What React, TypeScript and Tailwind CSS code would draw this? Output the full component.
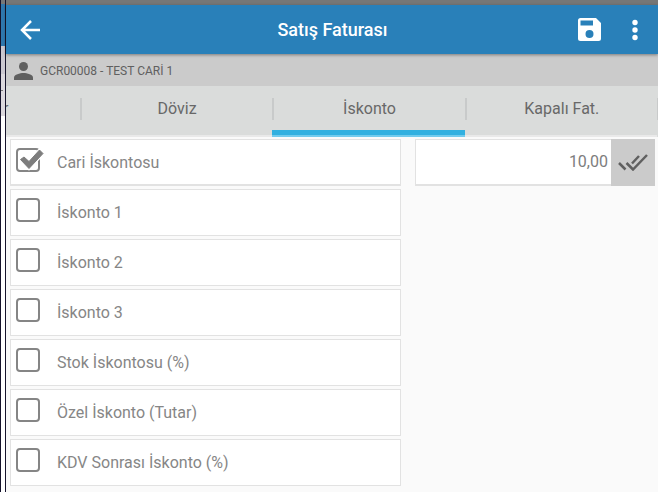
import React from 'react';
import clsx from 'clsx';

interface DiscountOption {
  id: string;
  label: string;
  checked?: boolean;
}

const OPTIONS: DiscountOption[] = [
  { id: 'cari', label: 'Cari İskontosu', checked: true },
  { id: 'iskonto1', label: 'İskonto 1' },
  { id: 'iskonto2', label: 'İskonto 2' },
  { id: 'iskonto3', label: 'İskonto 3' },
  { id: 'stok', label: 'Stok İskontosu (%)' },
  { id: 'ozel', label: 'Özel İskonto (Tutar)' },
  { id: 'kdv', label: 'KDV Sonrası İskonto (%)' },
];

const TABS = ['Döviz', 'İskonto', 'Kapalı Fat.'];

const OptionRow: React.FC<{ option: DiscountOption }> = ({ option }) => (
  <li
    className={clsx(
      'flex h-[47px] items-start border border-[#e2e2e2] bg-white pl-[5px] pt-2',
      option.checked && 'border-b-2'
    )}
  >
    <span className="relative block size-6 shrink-0">
      <input
        id={option.id}
        type="checkbox"
        defaultChecked={option.checked}
        className="peer block size-6 appearance-none rounded-[4px] border-2 border-[#858585]"
      />
      <svg viewBox="0 0 28 24" className="pointer-events-none absolute left-0 top-0 hidden h-6 w-7 peer-checked:block">
        <path d="M4.500 11.500 8 9l5 4.500L23.500 2 27 5.500 13 20.500z" fill="#fff" stroke="#fff" strokeWidth="3" />
        <path d="M4.500 11.500 8 9l5 4.500L23.500 2 27 5.500 13 20.500z" fill="#7d7d7d" stroke="#7d7d7d" strokeLinejoin="round" />
      </svg>
    </span>
    <label htmlFor={option.id} className="ml-[17px] pt-[3px] text-[16px] leading-6 text-[#868686]">
      {option.label}
    </label>
  </li>
);

export default function App() {
  return (
    <div className="flex min-h-screen overflow-hidden bg-[#fafafa] font-['Roboto','Liberation_Sans',sans-serif]">
      {/* Edge of the screen behind */}
      <div className="flex w-[6px] shrink-0 flex-col border-l border-r border-[#15132b] bg-white">
        <div className="h-1 bg-[#777]" />
        <div className="h-[42px] bg-[#2f78ae]" />
        <div className="h-7 bg-[#cbc8d0]" />
        <div className="h-[42px] bg-[#dbd8dd] pt-4">
          <div className="h-px w-[2px] bg-[#777]" />
        </div>
      </div>

      <div className="flex min-w-0 flex-1 flex-col">
        <div className="h-[5px] bg-[#777776]" />

        <header className="relative z-10 flex h-[49px] items-center bg-[#2980b9] text-white shadow-[0_1px_3px_rgba(0,0,0,0.4)]">
          <button type="button" aria-label="Geri" className="flex w-12 justify-center">
            <svg viewBox="0 0 20 20" className="size-5" fill="none" stroke="currentColor" strokeWidth="2.500">
              <path d="M20 10H2M11 1 2 10l9 9" />
            </svg>
          </button>
          <h1 className="flex-1 pl-11 text-center text-[18px] font-medium leading-6">Satış Faturası</h1>
          <button type="button" aria-label="Kaydet" className="flex w-11 justify-center">
            <svg viewBox="0 0 23 23" className="size-[23px]" fill="currentColor" fillRule="evenodd">
              <path d="M2.500 0H18l5 5v15.500a2.500 2.500 0 0 1-2.500 2.500h-18A2.500 2.500 0 0 1 0 20.500v-18A2.500 2.500 0 0 1 2.500 0zM2.500 2.500v5h12.500v-5zM11.500 12a4 4 0 1 0 0 8 4 4 0 0 0 0-8z" />
            </svg>
          </button>
          <button type="button" aria-label="Menü" className="flex w-[47px] justify-center">
            <svg viewBox="0 0 6 22" className="h-[22px] w-[6px]" fill="currentColor">
              <circle cx="3" cy="3.500" r="2.700" />
              <circle cx="3" cy="11" r="2.700" />
              <circle cx="3" cy="18.500" r="2.700" />
            </svg>
          </button>
        </header>

        <div className="flex h-8 items-center gap-[7px] bg-[#cbcbcb] pl-2 pt-[2px] text-[#606060]">
          <svg viewBox="0 0 19 18" className="h-[18px] w-[19px]" fill="currentColor">
            <circle cx="9.500" cy="4.500" r="4.500" />
            <path d="M0 18v-2.500C0 12.500 6 11 9.500 11s9.500 1.500 9.500 4.500V18z" />
          </svg>
          <span className="text-[12px] leading-4">GCR00008 - TEST CARİ 1</span>
        </div>

        <nav className="flex h-[51px] bg-[#dadcdb] text-[16px] leading-[22px] text-[#686868]">
          {/* Scrolled almost out of view */}
          <button type="button" className="flex w-[74px] shrink-0 items-start overflow-hidden border-b-2 border-[#e9e9e9] pt-3">
            <span className="-ml-[3px]">r</span>
          </button>
          {TABS.map((tab) => {
            const active = tab === 'İskonto';
            return (
              <button
                key={tab}
                type="button"
                className={clsx(
                  'flex flex-1 flex-col justify-between border-b-2 pt-3',
                  active ? 'border-[#72cbed]' : 'border-[#e9e9e9]'
                )}
              >
                <span className="w-full border-l-2 border-[#c8caca]">{tab}</span>
                {active && <span className="h-[5px] w-full bg-[#31b0e0]" />}
              </button>
            );
          })}
          <span className="mt-3 h-[22px] w-px bg-[#c8caca]" />
        </nav>

        <main className="grid grid-cols-[391fr_240fr] items-start gap-[14px] pl-1 pr-[3px] pt-[2px]">
          <ul className="flex flex-col gap-[3px]">
            {OPTIONS.map((option) => (
              <OptionRow key={option.id} option={option} />
            ))}
          </ul>
          <div className="flex h-[47px] min-w-0">
            <input
              type="text"
              aria-label="Cari İskontosu"
              defaultValue="10,00"
              className="min-w-0 flex-1 border border-b-2 border-r-0 border-[#e2e2e2] bg-white pr-[3px] text-right text-[16px] leading-6 text-[#7d7d7d]"
            />
            <button type="button" aria-label="Uygula" className="flex w-11 items-center justify-center bg-[#cbcbcb]">
              <svg viewBox="0 0 30 17" className="h-[17px] w-[30px]" fill="none" stroke="#606060" strokeWidth="2.500">
                <path d="m1 9 6.500 6.500M8.500 9l6.500 6.500L29 1M14 9.500 21 2" />
              </svg>
            </button>
          </div>
        </main>
      </div>
    </div>
  );
}
